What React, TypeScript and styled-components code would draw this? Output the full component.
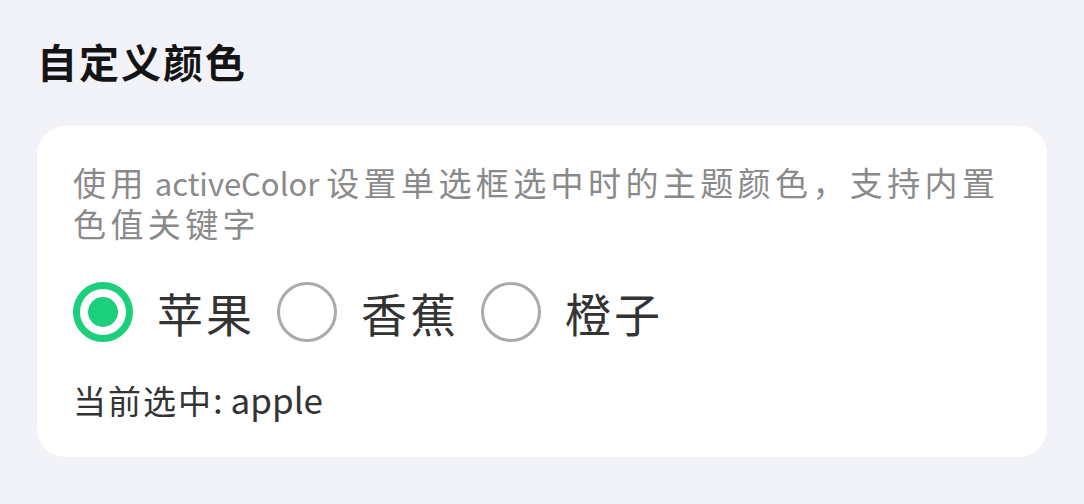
import React, { useState } from "react";
import styled, { createGlobalStyle } from "styled-components";

const GlobalStyle = createGlobalStyle`
  html, body {
    margin: 0;
    padding: 0;
    background: #f2f3f8;
  }
  body {
    font-family: "Noto Sans CJK SC", "Noto Sans", sans-serif;
  }
`;

const Page = styled.div`
  padding: 33px 37px 0 37px;
  display: flex;
  flex-direction: column;
`;

const Title = styled.h2`
  margin: 0;
  font-size: 40px;
  line-height: 56px;
  font-weight: 700;
  letter-spacing: 2px;
  color: #141414;
`;

const Card = styled.div`
  margin-top: 37px;
  width: 1010px;
  box-sizing: border-box;
  background: #ffffff;
  border-radius: 28px;
  padding: 36px 36px 37px 36px;
  display: flex;
  flex-direction: column;
`;

const Desc = styled.p`
  margin: 0 0 39px 0;
  font-size: 33px;
  line-height: 40px;
  letter-spacing: 4.4px;
  color: #8a8a8a;
`;

const Latin = styled.span<{ $size: number }>`
  display: inline-block;
  font-size: ${(p) => p.$size}px;
  line-height: 40px;
  letter-spacing: 0;
  white-space: pre;
`;

const Group = styled.div`
  display: flex;
  align-items: center;
  gap: 22px;
  margin-bottom: 37px;
`;

const Item = styled.label`
  display: flex;
  align-items: center;
  gap: 24px;
  cursor: pointer;
`;

const Circle = styled.span<{ $checked: boolean; $color: string }>`
  width: 60px;
  height: 60px;
  box-sizing: border-box;
  border-radius: 50%;
  border: ${(p) => (p.$checked ? `7px solid ${p.$color}` : "3px solid #aaaaaa")};
  display: flex;
  align-items: center;
  justify-content: center;
  flex-shrink: 0;
`;

const Dot = styled.span<{ $color: string }>`
  width: 30px;
  height: 30px;
  border-radius: 50%;
  background: ${(p) => p.$color};
`;

const Label = styled.span`
  font-size: 46px;
  line-height: 60px;
  letter-spacing: 3px;
  color: #333333;
`;

const Status = styled.div`
  font-size: 33px;
  line-height: 40px;
  letter-spacing: 2px;
  color: #333333;
`;

const options = [
  { value: "apple", label: "苹果" },
  { value: "banana", label: "香蕉" },
  { value: "orange", label: "橙子" },
];

export default function App() {
  const [value, setValue] = useState("apple");
  const color = "#1ccf7c";
  return (
    <>
      <GlobalStyle />
      <Page>
        <Title>自定义颜色</Title>
        <Card>
          <Desc>
            使用<Latin $size={31}> activeColor </Latin>设置单选框选中时的主题颜色，支持内置色值关键字
          </Desc>
          <Group>
            {options.map((o) => (
              <Item key={o.value} onClick={() => setValue(o.value)}>
                <Circle $checked={value === o.value} $color={color}>
                  {value === o.value && <Dot $color={color} />}
                </Circle>
                <Label>{o.label}</Label>
              </Item>
            ))}
          </Group>
          <Status>
            当前选中<Latin $size={35}>: {value}</Latin>
          </Status>
        </Card>
      </Page>
    </>
  );
}
